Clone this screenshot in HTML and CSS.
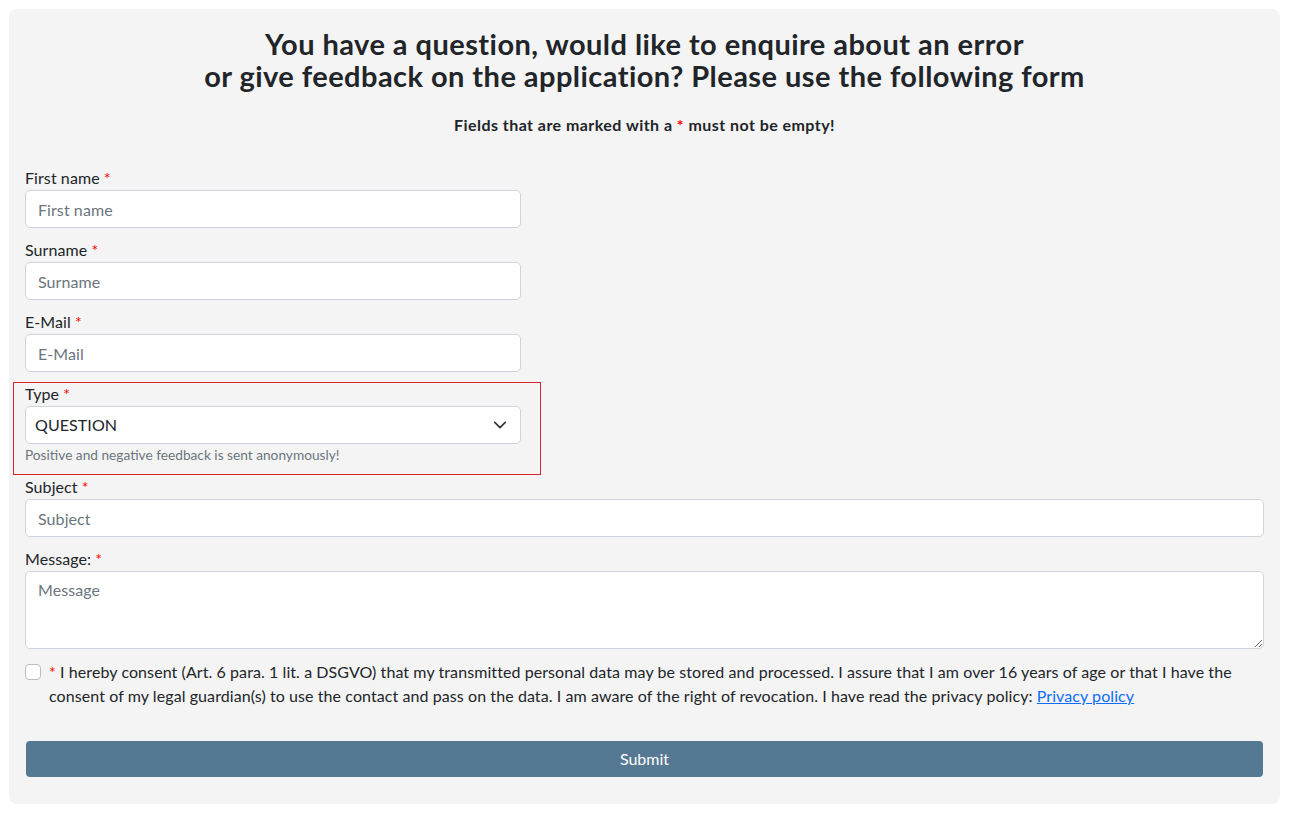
FILE: index.html
```html
<!DOCTYPE html>
<html lang="en">
<head>
<meta charset="utf-8">
<title>Contact form</title>
<link rel="stylesheet" href="styles.css">
</head>
<body>
<div class="card">
  <h1 class="title">You have a question, would like to enquire about an error<br>or give feedback on the application? Please use the following form</h1>
  <p class="subtitle">Fields that are marked with a <span class="req">*</span> must not be empty!</p>
  <form class="form">
    <div class="group">
      <label class="label">First name <span class="req">*</span></label>
      <input class="input narrow" type="text" placeholder="First name">
    </div>
    <div class="group">
      <label class="label">Surname <span class="req">*</span></label>
      <input class="input narrow" type="text" placeholder="Surname">
    </div>
    <div class="group">
      <label class="label">E-Mail <span class="req">*</span></label>
      <input class="input narrow" type="text" placeholder="E-Mail">
    </div>
    <div class="group type-group">
      <label class="label">Type <span class="req">*</span></label>
      <div class="select-wrap narrow">
        <select class="input select"><option>QUESTION</option></select>
        <svg class="chevron" width="14" height="14" viewBox="0 0 16 16"><path d="M2 5l6 6 6-6" fill="none" stroke="#343a40" stroke-width="2" stroke-linecap="round" stroke-linejoin="round"/></svg>
      </div>
      <div class="help">Positive and negative feedback is sent anonymously!</div>
    </div>
    <div class="group">
      <label class="label">Subject <span class="req">*</span></label>
      <input class="input" type="text" placeholder="Subject">
    </div>
    <div class="group">
      <label class="label">Message: <span class="req">*</span></label>
      <textarea class="input textarea" placeholder="Message"></textarea>
    </div>
    <div class="consent">
      <span class="checkbox"></span>
      <p class="consent-text"><span class="req">*</span> I hereby consent (Art. 6 para. 1 lit. a DSGVO) that my transmitted personal data may be stored and processed. I assure that I am over 16 years of age or that I have the consent of my legal guardian(s) to use the contact and pass on the data. I am aware of the right of revocation. I have read the privacy policy: <a href="#" class="link">Privacy policy</a></p>
    </div>
    <button type="button" class="submit">Submit</button>
  </form>
</div>
</body>
</html>
```
FILE: styles.css
```css
* { box-sizing: border-box; }
html, body { background: #ffffff; }
body {
  margin: 9px 14px 0 9px;
  font-family: "Lato", "Noto Sans", sans-serif;
  font-size: 16px;
  line-height: 24px;
  letter-spacing: 0.08px;
  color: #212529;
}
.card {
  background: #f4f4f4;
  border-radius: 8px;
  padding: 19px 16px 27px 16px;
}
.title {
  margin: 0;
  text-align: center;
  font-size: 29px;
  line-height: 32px;
  letter-spacing: 0.45px;
  font-weight: 700;
}
.subtitle {
  margin: 22px 0 0 0;
  text-align: center;
  font-size: 16px;
  line-height: 22px;
  letter-spacing: 0.45px;
  font-weight: 700;
}
.req { color: #ff0000; }
.form { margin-top: 30px; }
.group { margin-bottom: 10px; }
.label { display: block; height: 24px; }
.input {
  display: block;
  width: 100%;
  height: 38px;
  padding: 6px 12px;
  font: inherit;
  letter-spacing: inherit;
  color: #212529;
  background: #ffffff;
  border: 1px solid #ced4da;
  border-radius: 5px;
  outline: none;
}
.input::placeholder { color: #6c757d; }
.narrow { width: 496px; }
.type-group {
  width: 528px;
  margin: 1px 0 0 -12px;
  padding: 0 18px 9px 11px;
  border: 1px solid #d9232c;
}
.type-group .label { margin-top: -1px; }
.select-wrap { position: relative; }
.select {
  appearance: none;
  -webkit-appearance: none;
  padding-left: 9px;
}
.chevron {
  position: absolute;
  right: 14px;
  top: 12px;
}
.help {
  font-size: 13.7px;
  line-height: 20px;
  letter-spacing: 0;
  color: #6c757d;
  margin-top: 1px;
}
.textarea {
  height: 78px;
  resize: vertical;
}
.consent {
  display: flex;
  gap: 8px;
  margin-top: 11px;
}
.checkbox {
  flex: none;
  width: 16px;
  height: 16px;
  margin-top: 4px;
  background: #ffffff;
  border: 1px solid #b9bec4;
  border-radius: 4px;
}
.consent-text { margin: 0; }
.link { color: #0d6efd; text-decoration: underline; }
.submit {
  display: block;
  width: calc(100% - 2px);
  margin: 33px 1px 0 1px;
  height: 36px;
  background: #557893;
  color: #ffffff;
  border: none;
  border-radius: 4px;
  font: inherit;
}
```
